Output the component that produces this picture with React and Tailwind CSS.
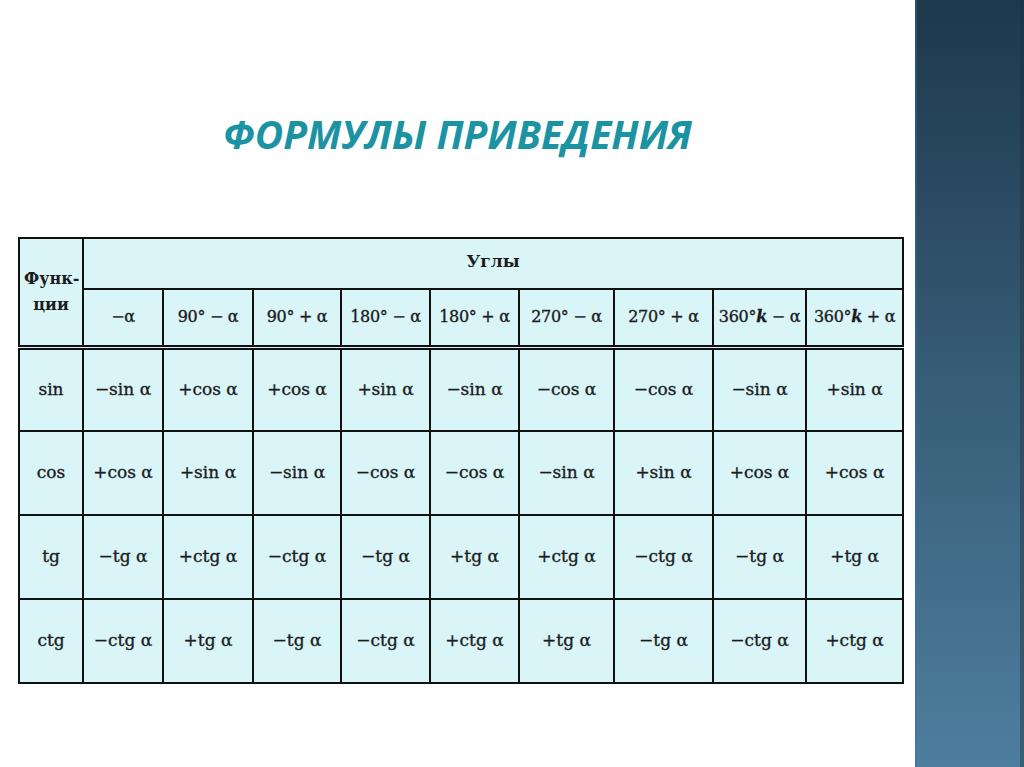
const angles = [
  "−α",
  "90° − α",
  "90° + α",
  "180° − α",
  "180° + α",
  "270° − α",
  "270° + α",
  "360°k − α",
  "360°k + α",
];

const widths = [80, 90, 88, 89, 89, 95, 99, 93, 97];

const rows = [
  ["sin", ["−sin α", "+cos α", "+cos α", "+sin α", "−sin α", "−cos α", "−cos α", "−sin α", "+sin α"]],
  ["cos", ["+cos α", "+sin α", "−sin α", "−cos α", "−cos α", "−sin α", "+sin α", "+cos α", "+cos α"]],
  ["tg", ["−tg α", "+ctg α", "−ctg α", "−tg α", "+tg α", "+ctg α", "−ctg α", "−tg α", "+tg α"]],
  ["ctg", ["−ctg α", "+tg α", "−tg α", "−ctg α", "+ctg α", "+tg α", "−tg α", "−ctg α", "+ctg α"]],
];

function Angle({ text }) {
  if (!text.includes("k")) return text;
  const [a, b] = text.split("k");
  return (
    <>
      {a}
      <i className="font-bold">k</i>
      {b}
    </>
  );
}

export default function App() {
  return (
    <div className="flex h-[767px] w-[1024px] overflow-hidden bg-white">
      <main className="flex w-[915px] flex-col">
        <h1 className="mt-[110px] text-center text-[39px] font-bold italic leading-[48px] text-[#1b93a2] [font-family:'Open_Sans',sans-serif]">
          ФОРМУЛЫ ПРИВЕДЕНИЯ
        </h1>

        <table className="ml-[18px] mt-[79px] w-[884px] table-fixed border-collapse bg-[#d9f5f8] text-[17px] text-[#1c1c1c] [-webkit-text-stroke:0.35px_#1c1c1c] [font-family:'DejaVu_Serif',serif]">
          <colgroup>
            <col className="w-[64px]" />
            {widths.map((w, i) => (
              <col key={i} style={{ width: w }} />
            ))}
          </colgroup>
          <thead>
            <tr className="h-[51px]">
              <th
                rowSpan={2}
                className="border-2 border-b-[5px] border-double border-[#111] px-1 align-middle text-[16px] font-bold leading-[26px] [-webkit-text-stroke:0px]"
              >
                Функ-
                <br />
                ции
              </th>
              <th colSpan={9} className="border-2 border-[#111] pb-1 text-[17px] font-bold [-webkit-text-stroke:0px]">
                Углы
              </th>
            </tr>
            <tr className="h-[58px]">
              {angles.map((a, i) => (
                <th key={i} className="whitespace-nowrap border-2 border-b-[5px] border-double border-[#111] px-0 text-[16px] font-normal tracking-[-0.3px]">
                  <Angle text={a} />
                </th>
              ))}
            </tr>
          </thead>
          <tbody>
            {rows.map(([fn, vals]) => (
              <tr key={fn} className="h-[84px]">
                <td className="border-2 border-[#111] text-center">{fn}</td>
                {vals.map((v, i) => (
                  <td key={i} className="whitespace-nowrap border-2 border-[#111] text-center">
                    {v}
                  </td>
                ))}
              </tr>
            ))}
          </tbody>
        </table>
      </main>

      <aside className="flex w-[109px] bg-gradient-to-b from-[#1e384c] via-[#375d77] to-[#4e7e9e]">
        <div className="w-[2px] bg-[#4a6f88]/40" />
        <div className="flex-1" />
        <div className="w-[4px] bg-[#1a2f40]/40" />
      </aside>
    </div>
  );
}
